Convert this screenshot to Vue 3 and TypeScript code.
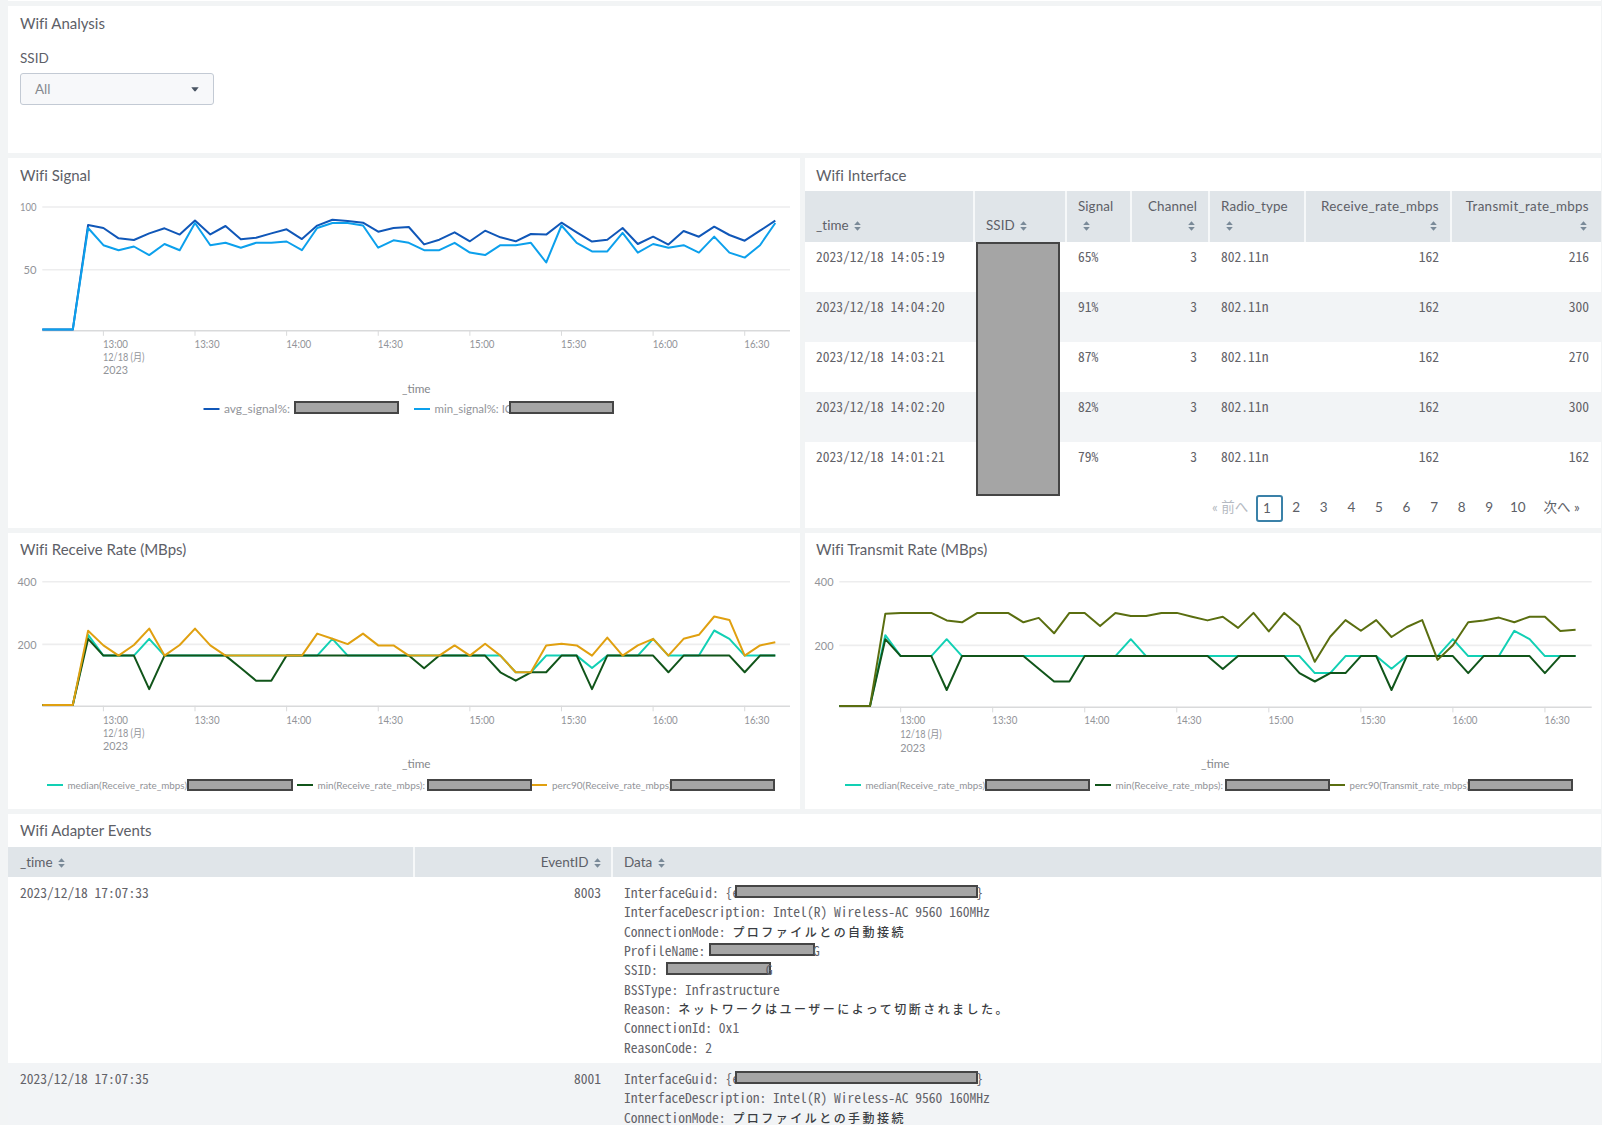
<script setup lang="ts">
import { h } from 'vue'

type Series = { name: string; color: string; values: number[] }
type Label = { x: number; w: number; text: string }
type Chart = {
  width: number
  height: number
  left: number
  right: number
  step: number
  base: number
  perUnit: number
  grid: { y: number; text: string; x: number; w: number }[]
  tickY: number
  dateY: number
  yearY: number
  titleX: number
  titleY: number
  legendY: number
  legendSize: number
  keys: { x: number; color: string }[]
  labels: Label[]
  masks: { x: number; y: number; w: number; h: number }[]
  series: Series[]
}

const SortIcon = () =>
  h('svg', { class: 'sort', width: 7, height: 10, viewBox: '0 0 7 10' }, [
    h('path', { d: 'M3.5 0.3L6.8 4.1H0.2ZM3.5 9.7L0.2 5.9H6.8Z', fill: '#7a8a98' }),
  ])

const hours = ['13:00', '13:30', '14:00', '14:30', '15:00', '15:30', '16:00', '16:30']

const avgSignal = [0, 0, 0, 85.4, 83, 74.6, 73.2, 78.6, 82.7, 77.6, 89, 77.8, 84.6, 73.8, 75.1, 78.6, 81.9, 74, 84.9, 89.7, 88.6, 87.3, 80, 83, 83.8, 69.7, 73.5, 79.5, 72.2, 80.8, 75.4, 72.2, 78.1, 77.6, 87.3, 79.5, 71.9, 73.5, 83, 70, 75.9, 69.5, 80.5, 75.9, 84, 77.3, 72.7, 80.8, 88.9]
const minSignal = [0, 0, 0, 83, 69, 65, 68, 61, 70, 65, 87, 69, 71, 67, 71, 71, 72, 65, 83, 87, 87, 85, 67, 73, 71, 65, 65, 71, 63, 61, 69, 69, 71, 55, 85, 71, 64, 64, 79, 63, 70, 67, 69, 63, 76, 63, 59, 69, 87]
const median = [0, 0, 0, 229, 162, 162, 162, 216, 162, 162, 162, 162, 162, 162, 162, 162, 162, 162, 162, 216, 162, 162, 162, 162, 162, 162, 162, 162, 162, 162, 162, 108, 108, 162, 162, 162, 122, 162, 162, 162, 216, 162, 162, 162, 243, 216, 162, 162, 162]
const minimum = [0, 0, 0, 216, 162, 162, 162, 54, 162, 162, 162, 162, 162, 122, 81, 81, 162, 162, 162, 162, 162, 162, 162, 162, 162, 121, 162, 162, 162, 162, 108, 81, 108, 108, 162, 162, 54, 162, 162, 162, 162, 108, 162, 162, 162, 162, 108, 162, 162]
const percReceive = [0, 0, 0, 242, 195, 162, 196, 249, 162, 196, 249, 195, 162, 162, 162, 162, 162, 162, 233, 216, 199, 233, 195, 195, 162, 162, 162, 195, 162, 200, 162, 108, 108, 195, 200, 195, 162, 220, 162, 195, 216, 162, 216, 229, 288, 277, 162, 195, 205]
const percTransmit = [0, 0, 0, 297, 300, 300, 300, 276, 270, 300, 300, 300, 270, 284, 235, 300, 300, 258, 300, 290, 290, 300, 300, 288, 276, 288, 252, 300, 241, 300, 258, 144, 224, 277, 243, 277, 223, 255, 277, 150, 197, 270, 276, 285, 270, 288, 288, 242, 246]

const signal: Chart = {
  width: 792, height: 330, left: 34.3, right: 782, step: 15.27, base: 132.3, perUnit: 1.233,
  grid: [
    { y: 9, text: '100', x: 12, w: 16.5 },
    { y: 71.7, text: '50', x: 15.5, w: 13 },
  ],
  tickY: 151, dateY: 164, yearY: 177.2, titleX: 394, titleY: 194.5, legendY: 215, legendSize: 11.5,
  keys: [{ x: 195.5, color: '#1057b8' }, { x: 406, color: '#0ca0ec' }],
  labels: [{ x: 216, w: 66, text: 'avg_signal%:' }, { x: 426.5, w: 78, text: 'min_signal%: IC' }],
  masks: [{ x: 286, y: 203, w: 105, h: 13 }, { x: 501, y: 203, w: 105, h: 13 }],
  series: [
    { name: 'avg', color: '#1057b8', values: avgSignal },
    { name: 'min', color: '#0ca0ec', values: minSignal },
  ],
}

const receive: Chart = {
  width: 792, height: 242, left: 34.3, right: 782, step: 15.27, base: 139.8, perUnit: 0.31,
  grid: [
    { y: 15.7, text: '400', x: 9.5, w: 19 },
    { y: 78.4, text: '200', x: 9.5, w: 19 },
  ],
  tickY: 158.5, dateY: 172, yearY: 185.2, titleX: 394, titleY: 202, legendY: 223, legendSize: 9.8,
  keys: [{ x: 39, color: '#12d0b4' }, { x: 289, color: '#11551a' }, { x: 523, color: '#e0a010' }],
  labels: [
    { x: 59.5, w: 122, text: 'median(Receive_rate_mbps):' },
    { x: 309.5, w: 107.5, text: 'min(Receive_rate_mbps):' },
    { x: 544, w: 122, text: 'perc90(Receive_rate_mbps):' },
  ],
  masks: [{ x: 179, y: 213, w: 106, h: 12 }, { x: 419, y: 213, w: 105, h: 12 }, { x: 662, y: 213, w: 105, h: 12 }],
  series: [
    { name: 'median', color: '#12d0b4', values: median },
    { name: 'min', color: '#11551a', values: minimum },
    { name: 'perc90', color: '#e0a010', values: percReceive },
  ],
}

const transmit: Chart = {
  width: 796, height: 242, left: 34.3, right: 786.7, step: 15.34, base: 140.9, perUnit: 0.3133,
  grid: [
    { y: 15.7, text: '400', x: 9.5, w: 19 },
    { y: 79.4, text: '200', x: 9.5, w: 19 },
  ],
  tickY: 158.5, dateY: 173, yearY: 186.5, titleX: 396, titleY: 202, legendY: 223, legendSize: 9.8,
  keys: [{ x: 40, color: '#12d0b4' }, { x: 290, color: '#11551a' }, { x: 524, color: '#5a6e10' }],
  labels: [
    { x: 60.5, w: 122, text: 'median(Receive_rate_mbps):' },
    { x: 310.5, w: 107.5, text: 'min(Receive_rate_mbps):' },
    { x: 544.5, w: 122, text: 'perc90(Transmit_rate_mbps):' },
  ],
  masks: [{ x: 180, y: 213, w: 105, h: 12 }, { x: 420, y: 213, w: 105, h: 12 }, { x: 663, y: 213, w: 105, h: 12 }],
  series: [
    { name: 'median', color: '#12d0b4', values: median },
    { name: 'min', color: '#11551a', values: minimum },
    { name: 'perc90', color: '#5a6e10', values: percTransmit },
  ],
}

const points = (c: Chart, s: Series): string =>
  s.values
    .map((v, i) => `${(c.left + i * c.step).toFixed(1)},${Math.min(c.base - v * c.perUnit, c.base - 0.8).toFixed(1)}`)
    .join(' ')

// Draws one complete chart: grid, axis, lines, legend and masked names.
const TimeChart = ({ c }: { c: Chart }) => {
  const x = (i: number) => c.left + (4 + i * 6) * c.step
  const fit = (w: number) => ({ textLength: w, lengthAdjust: 'spacingAndGlyphs' })
  return h('svg', { class: 'chart', width: c.width, height: c.height, viewBox: `0 0 ${c.width} ${c.height}` }, [
    ...c.grid.map(g => h('line', { x1: c.left, x2: c.right, y1: g.y, y2: g.y, stroke: '#ededee', 'stroke-width': 1.6 })),
    ...c.grid.map(g => h('text', { x: g.x, y: g.y + 4.4, ...fit(g.w) }, g.text)),
    h('line', { x1: c.left, x2: c.right, y1: c.base + 0.4, y2: c.base + 0.4, stroke: '#d9dadb', 'stroke-width': 1.4 }),
    ...hours.map((_, i) => h('line', { x1: x(i), x2: x(i), y1: c.base, y2: c.base + 5.5, stroke: '#d9dadb', 'stroke-width': 1 })),
    ...hours.map((t, i) => h('text', { x: x(i) - 0.4, y: c.tickY - 1, ...fit(25) }, t)),
    h('text', { x: x(0) - 0.4, y: c.dateY - 1, ...fit(41.5) }, '12/18 (月)'),
    h('text', { x: x(0) - 0.4, y: c.yearY - 1, ...fit(25) }, '2023'),
    ...c.series.map(s => h('polyline', { points: points(c, s), fill: 'none', stroke: s.color, 'stroke-width': 2, 'stroke-linejoin': 'round' })),
    h('text', { x: c.titleX, y: c.titleY, class: 'axis', ...fit(28.5) }, '_time'),
    ...c.keys.map(k => h('line', { x1: k.x, x2: k.x + 16, y1: c.legendY - 4, y2: c.legendY - 4, stroke: k.color, 'stroke-width': 2 })),
    ...c.labels.map(l => h('text', { x: l.x, y: c.legendY, style: { fontSize: `${c.legendSize}px` }, ...fit(l.w) }, l.text)),
    ...c.masks.map(m => h('rect', { x: m.x + 1, y: m.y + 1, width: m.w - 2, height: m.h - 2, fill: '#a5a5a5', stroke: '#454545', 'stroke-width': 2 })),
  ])
}
TimeChart.props = ['c']

const rows = [
  { time: '2023/12/18 14:05:19', signal: '65%', transmit: '216' },
  { time: '2023/12/18 14:04:20', signal: '91%', transmit: '300' },
  { time: '2023/12/18 14:03:21', signal: '87%', transmit: '270' },
  { time: '2023/12/18 14:02:20', signal: '82%', transmit: '300' },
  { time: '2023/12/18 14:01:21', signal: '79%', transmit: '162' },
]
const pages = ['2', '3', '4', '5', '6', '7', '8', '9', '10']
</script>

<template>
  <div class="page">
    <div class="sliver"></div>
    <section class="panel analysis">
      <h2>Wifi Analysis</h2>
      <label class="field">SSID</label>
      <div class="select">
        <span>All</span>
        <svg width="8" height="5" viewBox="0 0 8 5"><path d="M0.3 0.3H7.7L4.8 4.1Q4 4.8 3.2 4.1Z" fill="#4a5563" /></svg>
      </div>
    </section>

    <div class="row signal-row">
      <section class="panel left">
        <h2>Wifi Signal</h2>
        <TimeChart :c="signal" />
      </section>
      <section class="panel right">
        <h2>Wifi Interface</h2>
        <div class="table">
          <div class="tr head">
            <div class="low">_time <SortIcon /></div>
            <div class="low">SSID <SortIcon /></div>
            <div class="stack">Signal<br><SortIcon /></div>
            <div class="stack num">Channel<br><SortIcon /></div>
            <div class="stack">Radio_type<br><SortIcon /></div>
            <div class="stack num wide">Receive_rate_mbps<br><SortIcon /></div>
            <div class="stack num wide">Transmit_rate_mbps<br><SortIcon /></div>
          </div>
          <div v-for="r in rows" :key="r.time" class="tr body mono">
            <div>{{ r.time }}</div>
            <div></div>
            <div>{{ r.signal }}</div>
            <div class="num">3</div>
            <div>802.11n</div>
            <div class="num">162</div>
            <div class="num">{{ r.transmit }}</div>
          </div>
          <div class="mask column-mask"></div>
        </div>
        <nav class="pager">
          <span class="prev">« 前へ</span>
          <span class="current">1</span>
          <span v-for="p in pages" :key="p" class="num-page">{{ p }}</span>
          <span class="next">次へ »</span>
        </nav>
      </section>
    </div>

    <div class="row rate-row">
      <section class="panel left">
        <h2>Wifi Receive Rate (MBps)</h2>
        <TimeChart :c="receive" />
      </section>
      <section class="panel right">
        <h2>Wifi Transmit Rate (MBps)</h2>
        <TimeChart :c="transmit" />
      </section>
    </div>

    <section class="panel events">
      <h2>Wifi Adapter Events</h2>
      <div class="etr ehead">
        <div>_time <SortIcon /></div>
        <div class="num">EventID <SortIcon /></div>
        <div>Data <SortIcon /></div>
      </div>
      <div class="etr mono">
        <div>2023/12/18 17:07:33</div>
        <div class="num">8003</div>
        <div>
          <p>InterfaceGuid: {e<i class="mask guid"></i>}</p>
          <p>InterfaceDescription: Intel(R) Wireless-AC 9560 160MHz</p>
          <p>ConnectionMode: <b>プロファイルとの自動接続</b></p>
          <p>ProfileName: <i class="mask profile"></i>G</p>
          <p>SSID: <i class="mask ssid"></i>G</p>
          <p>BSSType: Infrastructure</p>
          <p>Reason: <b>ネットワークはユーザーによって切断されました。</b></p>
          <p>ConnectionId: 0x1</p>
          <p>ReasonCode: 2</p>
        </div>
      </div>
      <div class="etr mono alt">
        <div>2023/12/18 17:07:35</div>
        <div class="num">8001</div>
        <div>
          <p>InterfaceGuid: {e<i class="mask guid"></i>}</p>
          <p>InterfaceDescription: Intel(R) Wireless-AC 9560 160MHz</p>
          <p>ConnectionMode: <b>プロファイルとの手動接続</b></p>
        </div>
      </div>
    </section>
  </div>
</template>

<style>
body {
  background: #f2f4f5;
}
.sort {
  display: inline-block;
  margin-left: 2px;
  vertical-align: -0.5px;
}
.stack .sort {
  margin-left: 5px;
}
.stack.num .sort {
  margin-right: 2px;
}
.chart {
  display: block;
}
.chart text {
  font: 10.6px Lato, 'Noto Sans CJK JP', sans-serif;
  fill: #929499;
}
.chart text.axis {
  font-size: 12px;
  fill: #85878c;
}
</style>

<style scoped>
.page {
  box-sizing: border-box;
  width: 1602px;
  height: 1125px;
  overflow: hidden;
  padding: 0 1px 0 8px;
  background: #f2f4f5;
  color: #5d6067;
  font: 13.5px/19.3px Lato, 'Noto Sans CJK JP', sans-serif;
  font-variant-ligatures: none;
  display: flex;
  flex-direction: column;
  gap: 5px;
}
.sliver {
  height: 1px;
  background: #fff;
  flex: none;
}
.panel {
  background: #fff;
  flex: none;
  overflow: hidden;
}
h2 {
  margin: 0;
  padding: 7px 0 0 12px;
  height: 26px;
  font-size: 15px;
  line-height: 20px;
  font-weight: 400;
}
.right h2 {
  padding-left: 11px;
}
.row {
  display: flex;
  gap: 5px;
  flex: none;
}
.left {
  width: 792px;
}
.right {
  width: 796px;
}
.analysis {
  height: 147px;
}
.field {
  display: block;
  padding: 9px 0 0 12px;
  height: 26px;
  line-height: 20px;
}
.select {
  box-sizing: border-box;
  display: flex;
  align-items: center;
  justify-content: space-between;
  width: 194px;
  height: 32px;
  margin: -1px 0 0 12px;
  padding: 1px 14px 0;
  border: 1.5px solid #c3cad4;
  border-radius: 3px;
  background: #f7f8fa;
  color: #85888e;
}
.signal-row {
  height: 370px;
}
.rate-row {
  height: 276px;
}
.rate-row h2,
.events h2 {
  padding-top: 6px;
  height: 27px;
}
.signal-row .left h2 {
  margin-bottom: 7px;
}
.table {
  position: relative;
}
.tr {
  display: grid;
  grid-template-columns: 170px 92px 65px 78px 96px 146px 149px;
  height: 50px;
}
.tr > div {
  padding-left: 11px;
}
.head {
  height: 51px;
  font-size: 13.4px;
  letter-spacing: 0.1px;
}
.head > div,
.ehead > div {
  background: #e0e5e9;
  border-right: 2px solid #f6f8f9;
}
.head > div {
  padding-top: 6px;
}
.head .low {
  padding-top: 25px;
}
.head .wide {
  letter-spacing: 0.32px;
}
.head > div:last-child,
.ehead > div:last-child {
  border-right: 0;
}
.tr .num {
  text-align: right;
  padding-right: 11px;
}
.tr.head .num:last-child,
.tr .num:last-child {
  padding-right: 12px;
}
.body > div {
  padding-top: 5px;
}
.body .num {
  padding-right: 13px;
}
.body .num:last-child {
  padding-right: 12px;
}
.body:nth-child(odd) {
  background: #f2f4f6;
}
.mono {
  font-family: 'Noto Sans Mono CJK JP', 'Liberation Mono', monospace;
  font-size: 13.56px;
  color: #626268;
}
.mask {
  box-sizing: border-box;
  border: 2px solid #454545;
  background: #a5a5a5;
}
.column-mask {
  position: absolute;
  left: 171px;
  top: 51px;
  width: 84px;
  height: 254px;
}
.pager {
  display: flex;
  align-items: center;
  height: 28px;
  margin-top: 2px;
  padding-left: 407px;
}
.prev {
  width: 44px;
  color: #b5bac2;
}
.current {
  box-sizing: border-box;
  width: 27px;
  height: 27px;
  line-height: 22px;
  padding-left: 5px;
  border: 2px solid #3a81a8;
  border-radius: 3px;
}
.num-page {
  width: 27.6px;
  text-align: center;
}
.current + .num-page {
  margin-left: -0.7px;
}
.num-page:nth-last-child(2) {
  width: 29.4px;
}
.next {
  margin-left: 11px;
}
.events {
  height: 320px;
}
.etr {
  display: grid;
  grid-template-columns: 407px 198px 1fr;
  height: 186px;
}
.etr > div {
  padding: 6px 12px 0 12px;
}
.etr > div:last-child {
  padding-left: 11px;
}
.ehead {
  height: 30px;
}
.ehead .num {
  padding-right: 10px;
}
.alt {
  background: #f2f4f6;
}
.num {
  text-align: right;
}
p {
  margin: 0;
  height: 19.35px;
  line-height: 19.35px;
  white-space: pre;
}
p b {
  font: 500 12px/19px 'Noto Sans CJK JP', sans-serif;
  letter-spacing: 2.48px;
  color: #3a3d42;
}
p .mask {
  display: inline-block;
  vertical-align: 0;
  height: 13px;
}
.guid {
  width: 243px;
  margin: 0 -2px 0 -4px;
}
.profile {
  width: 106px;
  margin: 0 -2px 0 -3px;
}
.ssid {
  width: 105px;
  margin: 0 -5px 0 1px;
}
</style>
